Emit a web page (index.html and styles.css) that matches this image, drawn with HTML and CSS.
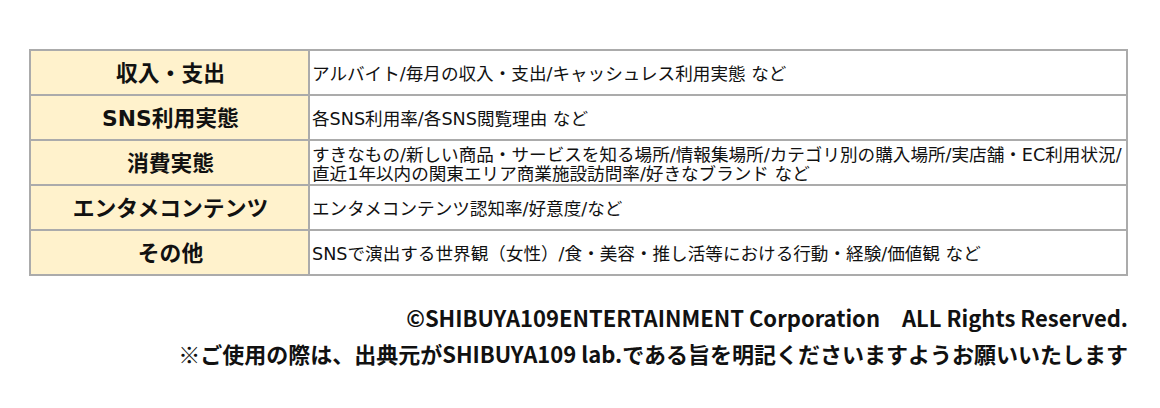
FILE: index.html
```html
<!DOCTYPE html>
<html lang="ja">
<head>
<meta charset="utf-8">
<title>調査項目</title>
<link rel="stylesheet" href="styles.css">
</head>
<body>
<div class="wrap">
  <div class="grid">
    <div class="label">収入・支出</div>
    <div class="desc">アルバイト/毎月の収入・支出/キャッシュレス利用実態 など</div>
    <div class="label">SNS利用実態</div>
    <div class="desc">各SNS利用率/各SNS閲覧理由 など</div>
    <div class="label">消費実態</div>
    <div class="desc">すきなもの/新しい商品・サービスを知る場所/情報集場所/カテゴリ別の購入場所/実店舗・EC利用状況/<br>直近1年以内の関東エリア商業施設訪問率/好きなブランド など</div>
    <div class="label">エンタメコンテンツ</div>
    <div class="desc">エンタメコンテンツ認知率/好意度/など</div>
    <div class="label">その他</div>
    <div class="desc">SNSで演出する世界観（女性）/食・美容・推し活等における行動・経験/価値観 など</div>
  </div>
  <div class="footer">
    <p>©SHIBUYA109ENTERTAINMENT Corporation　ALL Rights Reserved.</p>
    <p>※ご使用の際は、出典元がSHIBUYA109 lab.である旨を明記くださいますようお願いいたします</p>
  </div>
</div>
</body>
</html>
```
FILE: styles.css
```css
body {
  margin: 0;
  background: #ffffff;
}
.wrap {
  width: 1099px;
  margin: 49px 0 0 29px;
}
.grid {
  display: grid;
  grid-template-columns: 279px 818px;
  border-top: 2px solid #ababab;
  border-left: 2px solid #ababab;
}
.label,
.desc {
  box-sizing: border-box;
  min-height: 45px;
  border-right: 2px solid #ababab;
  border-bottom: 2px solid #ababab;
  display: flex;
  color: #111111;
}
.label {
  background: #fff2cc;
  justify-content: center;
  align-items: center;
  padding: 0 0 3px 2px;
  font-family: "DejaVu Sans", "Noto Sans CJK JP", sans-serif;
  font-weight: bold;
  font-size: 21.8px;
}
.desc {
  flex-direction: column;
  justify-content: center;
  align-items: flex-start;
  padding: 4px 0 0 2px;
  font-family: "DejaVu Sans", "Noto Sans CJK JP", sans-serif;
  font-size: 17.6px;
  line-height: 19px;
}
.footer {
  margin-top: 23px;
  text-align: right;
  font-family: "Noto Sans CJK JP", sans-serif;
  font-weight: bold;
  font-size: 22px;
  line-height: 36px;
  color: #111111;
}
.footer p {
  margin: 0;
}
```
